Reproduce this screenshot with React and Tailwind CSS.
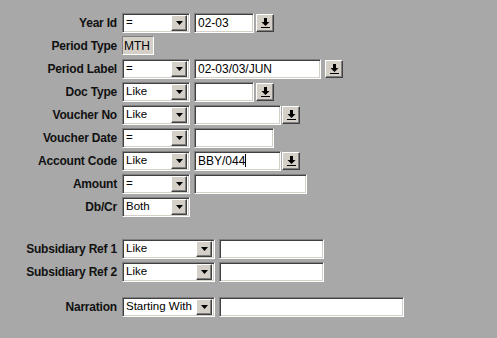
import React from 'react';

const FONT = { fontFamily: '"Liberation Sans", Arial, sans-serif' };

const sunken =
  'border border-t-[#808080] border-l-[#808080] border-b-white border-r-white shadow-[inset_1px_1px_0_#404040,inset_-1px_-1px_0_#d4d0c8] bg-white';

const raised =
  'bg-[#d4d0c8] flex items-center justify-center border border-t-white border-l-white border-b-[#404040] border-r-[#404040] shadow-[inset_-1px_-1px_0_#808080]';

const Tri = () => (
  <svg width="7" height="4" viewBox="0 0 7 4">
    <path d="M0 0h7L3.5 4z" fill="#000" />
  </svg>
);

const Combo = ({ value, w }) => (
  <div className={`${sunken} flex items-center h-[20px] pl-[3px] pr-[2px] ${w}`}>
    <span className="flex-1 text-[11.5px] pt-[1px] leading-none text-black whitespace-nowrap overflow-hidden">{value}</span>
    <span className={`w-[16px] h-[16px] shrink-0 ${raised}`}>
      <Tri />
    </span>
  </div>
);

const Field = ({ value, w, cursor }) => (
  <div className={`${sunken} flex items-center h-[20px] pl-[3px] ${w}`}>
    <span className="text-[12px] leading-none text-black">{value}</span>
    {cursor && <span className="w-px h-[13px] bg-black" />}
  </div>
);

const Lookup = ({ ml = 'ml-[2px]' }) => (
  <button className={`${ml} w-[18px] h-[18px] ${raised}`}>
    <svg width="9" height="10" viewBox="0 0 9 10">
      <path d="M3 0h3v4h2.5L4.5 8 0.5 4H3z" fill="#000" />
      <rect x="0" y="9" width="9" height="1" fill="#000" />
    </svg>
  </button>
);

const Row = ({ label, mt = '', children }) => (
  <div className={`flex items-center h-[23px] ${mt}`}>
    <div className="w-[122px] shrink-0 pr-[5px] text-right text-[12px] tracking-[-0.2px] font-bold text-[#111] whitespace-nowrap">
      {label}
    </div>
    <div className="flex items-center">{children}</div>
  </div>
);

export default function App() {
  return (
    <div className="w-[497px] h-[338px] bg-[#a8a8a8] pt-[11px] overflow-hidden" style={FONT}>
      <Row label="Year Id">
        <Combo value="=" w="w-[68px]" />
        <div className="ml-[4px]"><Field value="02-03" w="w-[60px]" /></div>
        <Lookup />
      </Row>
      <Row label="Period Type">
        <div className="h-[19px] w-[32px] bg-[#d4d0c8] border border-t-[#808080] border-l-[#808080] border-b-white border-r-white flex items-center pl-[1px] text-[12px]">MTH</div>
      </Row>
      <Row label="Period Label">
        <Combo value="=" w="w-[68px]" />
        <div className="ml-[4px]"><Field value="02-03/03/JUN" w="w-[127px]" /></div>
        <Lookup ml="ml-[4px]" />
      </Row>
      <Row label="Doc Type">
        <Combo value="Like" w="w-[68px]" />
        <div className="ml-[4px]"><Field value="" w="w-[60px]" /></div>
        <Lookup />
      </Row>
      <Row label="Voucher No">
        <Combo value="Like" w="w-[68px]" />
        <div className="ml-[4px]"><Field value="" w="w-[87px]" /></div>
        <Lookup ml="ml-[1px]" />
      </Row>
      <Row label="Voucher Date">
        <Combo value="=" w="w-[68px]" />
        <div className="ml-[4px]"><Field value="" w="w-[80px]" /></div>
      </Row>
      <Row label="Account Code">
        <Combo value="Like" w="w-[68px]" />
        <div className="ml-[4px]"><Field value="BBY/044" w="w-[87px]" cursor /></div>
        <Lookup ml="ml-[1px]" />
      </Row>
      <Row label="Amount">
        <Combo value="=" w="w-[68px]" />
        <div className="ml-[4px]"><Field value="" w="w-[113px]" /></div>
      </Row>
      <Row label="Db/Cr">
        <Combo value="Both" w="w-[68px]" />
      </Row>
      <Row label="Subsidiary Ref 1" mt="mt-[19px]">
        <Combo value="Like" w="w-[93px]" />
        <div className="ml-[4px]"><Field value="" w="w-[105px]" /></div>
      </Row>
      <Row label="Subsidiary Ref 2">
        <Combo value="Like" w="w-[93px]" />
        <div className="ml-[4px]"><Field value="" w="w-[105px]" /></div>
      </Row>
      <Row label="Narration" mt="mt-[12px]">
        <Combo value="Starting With" w="w-[93px]" />
        <div className="ml-[4px]"><Field value="" w="w-[185px]" /></div>
      </Row>
    </div>
  );
}
